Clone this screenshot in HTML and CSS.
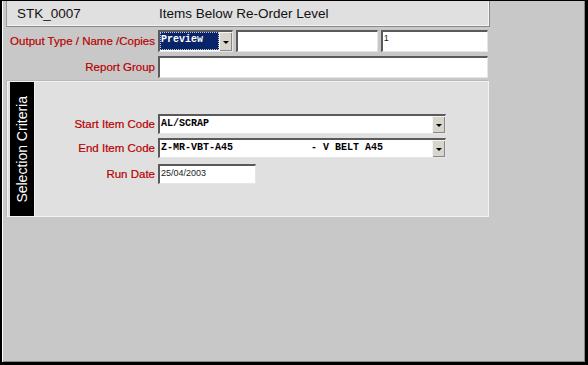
FILE: index.html
```html
<!DOCTYPE html>
<html lang="en">
<head>
  <meta charset="UTF-8" />
  <title>STK_0007 - Items Below Re-Order Level</title>
  <link rel="stylesheet" href="styles.css">
</head>
<body>
  <div class="window">
    <div class="titlebar">
      <span class="code">STK_0007</span>
      <span class="name">Items Below Re-Order Level</span>
    </div>

    <div class="form">
      <label class="lbl">Output Type / Name /Copies</label>
      <div class="fields">
        <div class="combo preview">
          <span class="value focused">Preview</span>
          <span class="drop"></span>
        </div>
        <div class="box name-box"></div>
        <div class="box copies-box">1</div>
      </div>

      <label class="lbl">Report Group</label>
      <div class="fields">
        <div class="box group-box"></div>
      </div>
    </div>

    <div class="panel">
      <div class="tab"><span>Selection Criteria</span></div>
      <div class="criteria">
        <label class="lbl">Start Item Code</label>
        <div class="combo item">
          <span class="value">AL/SCRAP</span>
          <span class="drop"></span>
        </div>

        <label class="lbl">End Item Code</label>
        <div class="combo item">
          <span class="value">Z-MR-VBT-A45             - V BELT A45</span>
          <span class="drop"></span>
        </div>

        <label class="lbl date-lbl">Run Date</label>
        <div class="box date-box">25/04/2003</div>
      </div>
    </div>
  </div>
</body>
</html>
```

FILE: styles.css
```css
body {
  margin: 0;
  font-family: 'Liberation Sans', Arial, sans-serif;
}

.window {
  width: 588px;
  height: 365px;
  box-sizing: border-box;
  background-color: #c8c8c8;
  border-top: 1px solid #000;
  border-left: 2px solid #000;
  border-right: 3px solid #000;
  border-bottom: 3px solid #000;
  box-shadow: inset 1px 0 #fff, inset -1px -1px #888;
  padding-left: 4px;
}

.titlebar {
  width: 484px;
  height: 26px;
  box-sizing: border-box;
  background-color: #e0e0e0;
  border-left: 1px solid #9a9a9a;
  border-right: 1px solid #8a8a8a;
  border-bottom: 1px solid #8a8a8a;
  box-shadow: inset -1px -1px #f4f4f4;
  display: flex;
  align-items: center;
  font-size: 13.5px;
  color: #111;
}

.titlebar .code {
  width: 142px;
  padding-left: 10px;
}

/* top rows */
.form {
  display: grid;
  grid-template-columns: 152px 330px;
  row-gap: 4px;
  margin-top: 3px;
}

.lbl {
  color: #b80000;
  font-size: 11.5px;
  text-align: right;
  padding-right: 3px;
  align-self: center;
  white-space: nowrap;
  -webkit-text-stroke: 0.2px #b80000;
}

.fields {
  display: flex;
  gap: 3px;
  height: 22px;
}

.box {
  box-sizing: border-box;
  height: 22px;
  background-color: #fff;
  border-style: solid;
  border-width: 2px 1px 1px 2px;
  border-color: #5a5a5a #e6e6e6 #e6e6e6 #5a5a5a;
  font-size: 9px;
  color: #222;
  padding: 1px 0 0 1px;
}

.name-box { width: 143px; }
.copies-box { width: 108px; }
.group-box { width: 330px; }

.combo {
  box-sizing: border-box;
  display: flex;
  background-color: #fff;
  border-style: solid;
  border-width: 2px 1px 1px 2px;
  border-color: #5a5a5a #e6e6e6 #e6e6e6 #5a5a5a;
}

.combo .value {
  flex: 1;
  font-family: 'Liberation Mono', 'Courier New', monospace;
  font-weight: bold;
  font-size: 10px;
  color: #000;
  white-space: pre;
  padding: 2px 0 0 1px;
}

.combo .drop {
  width: 12px;
  background-color: #d8d6cc;
  border-left: 1px solid #f4f4f4;
  border-top: 1px solid #f4f4f4;
  box-shadow: inset -1px -1px #888;
  display: flex;
  align-items: center;
  justify-content: center;
}

.combo .drop::after {
  content: "";
  border-left: 3px solid transparent;
  border-right: 3px solid transparent;
  border-top: 3px solid #000;
}

.preview {
  width: 75px;
  height: 22px;
}

.preview .value.focused {
  background-color: #0a246a;
  color: #fff;
  outline: 1px dotted #c8c8c8;
  outline-offset: -1px;
  margin-bottom: 1px;
}

/* selection criteria panel */
.panel {
  width: 482px;
  height: 136px;
  box-sizing: border-box;
  margin: 3px 0 0 1px;
  background-color: #e0e0e0;
  border: 1px solid #f2f2f2;
  box-shadow: -1px -1px #b8b8b8;
  padding-left: 2px;
  display: flex;
}

.tab {
  width: 24px;
  background-color: #000;
  color: #fff;
  display: flex;
  align-items: center;
  justify-content: center;
  border-right: 1px solid #f2f2f2;
}

.tab span {
  writing-mode: vertical-rl;
  transform: rotate(180deg);
  font-size: 14px;
  white-space: nowrap;
}

.criteria {
  display: grid;
  grid-template-columns: 123px auto;
  grid-auto-rows: min-content;
  row-gap: 4px;
  align-content: start;
  padding-top: 32px;
}

.item {
  width: 288px;
  height: 20px;
}

.date-lbl,
.date-box {
  margin-top: 2px;
}

.date-box {
  width: 98px;
  height: 20px;
  justify-self: start;
  padding-top: 2px;
}
```
